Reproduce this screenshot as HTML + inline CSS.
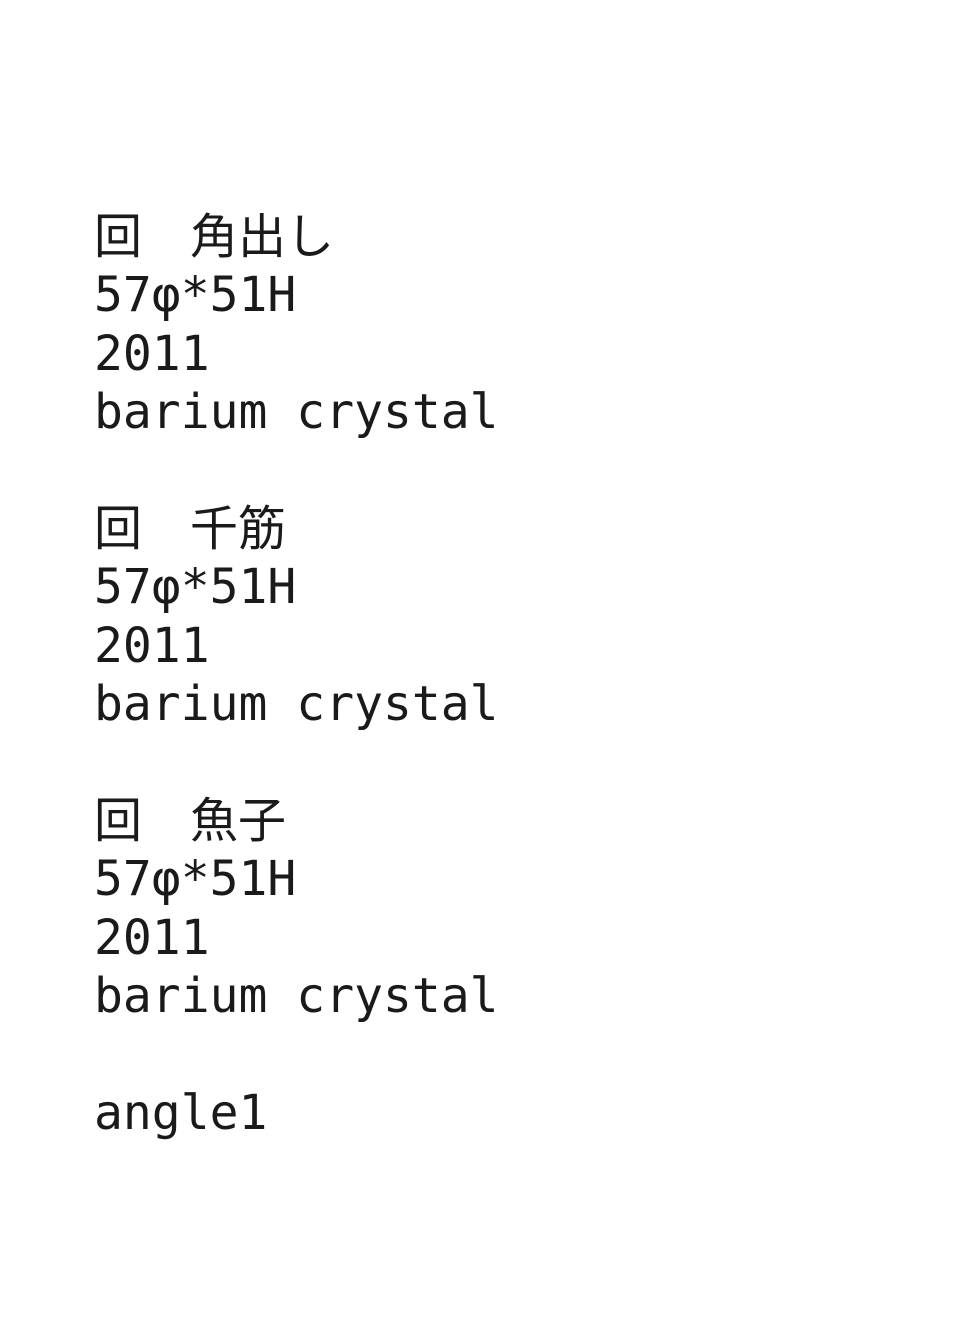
<!DOCTYPE html>
<html><head><meta charset="utf-8"><style>
html,body{margin:0;padding:0;background:#fff;width:960px;height:1344px;overflow:hidden}
pre{position:absolute;left:94px;top:208px;margin:0;font-family:"DejaVu Sans Mono","Noto Sans CJK JP",monospace;font-size:48px;line-height:58.4px;color:#1a1a1a;white-space:pre}
</style></head><body>
<pre>回　角出し
57φ*51H
2011
barium crystal

回　千筋
57φ*51H
2011
barium crystal

回　魚子
57φ*51H
2011
barium crystal

angle1</pre>
</body></html>
